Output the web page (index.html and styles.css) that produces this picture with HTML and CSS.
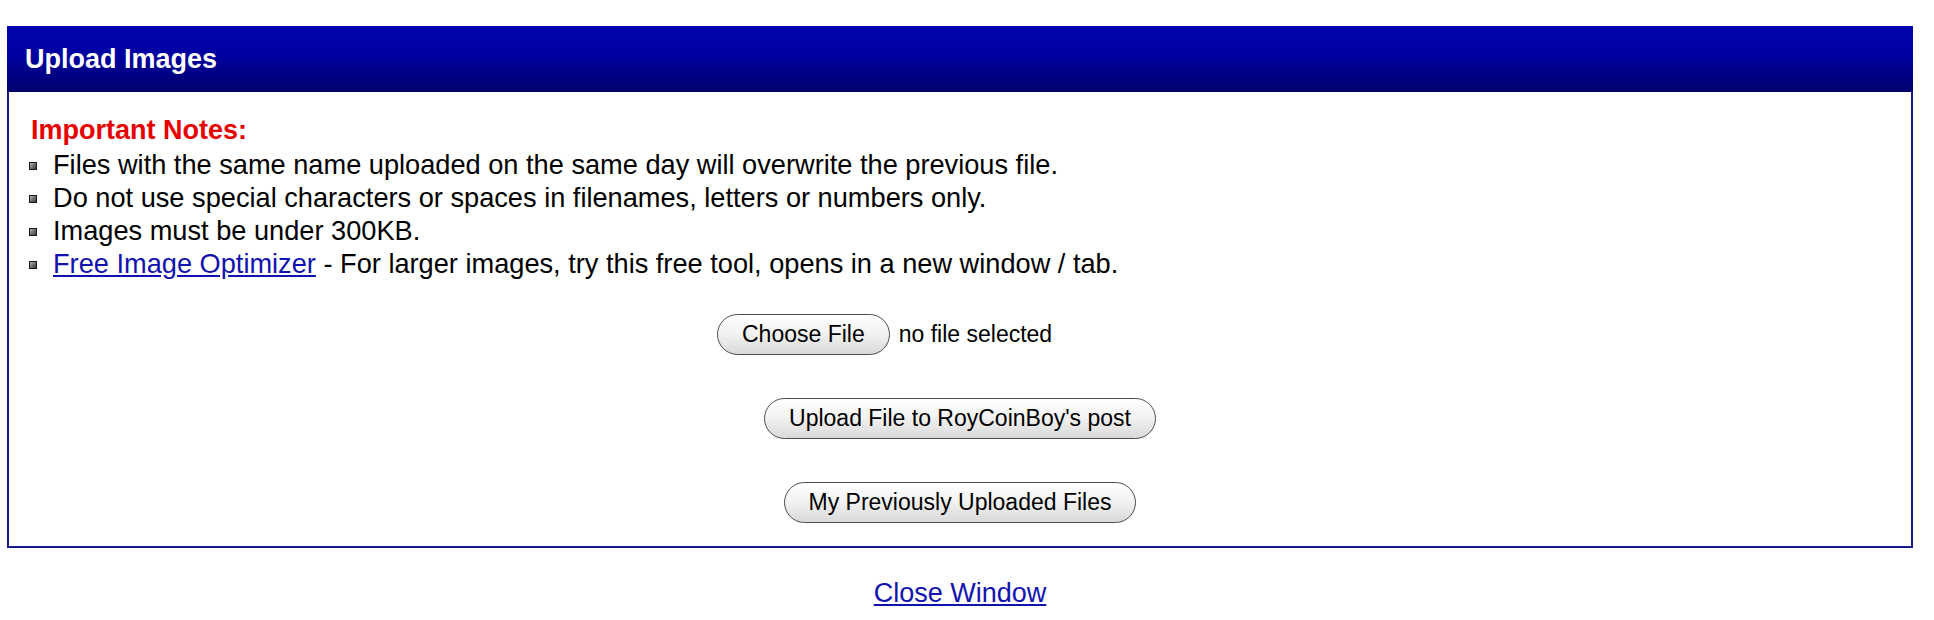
FILE: index.html
```html
<!DOCTYPE html>
<html lang="en">
<head>
<meta charset="utf-8">
<title>Upload Images</title>
<link rel="stylesheet" href="styles.css">
</head>
<body>
  <div class="panel">
    <div class="panel-head">Upload Images</div>
    <div class="panel-body">
      <div class="notes-title">Important Notes:</div>
      <ul class="notes">
        <li>Files with the same name uploaded on the same day will overwrite the previous file.</li>
        <li>Do not use special characters or spaces in filenames, letters or numbers only.</li>
        <li>Images must be under 300KB.</li>
        <li><a href="#" class="link">Free Image Optimizer</a> - For larger images, try this free tool, opens in a new window / tab.</li>
      </ul>
      <form class="upload-form">
        <div class="row">
          <div class="file-field">
            <span class="btn">Choose File</span>
            <span class="file-name">no file selected</span>
          </div>
        </div>
        <div class="row">
          <button type="button" class="btn">Upload File to RoyCoinBoy's post</button>
        </div>
        <div class="row">
          <button type="button" class="btn">My Previously Uploaded Files</button>
        </div>
      </form>
    </div>
  </div>
  <div class="footer">
    <a href="#" class="link">Close Window</a>
  </div>
</body>
</html>
```

FILE: styles.css
```css
html, body {
  margin: 0;
  padding: 0;
  background: #ffffff;
}

body {
  font-family: "Liberation Sans", Arial, Helvetica, sans-serif;
  font-size: 27px;
  line-height: 32.5px;
  color: #000;
}

.panel {
  margin: 26px 21px 0 7px;
  border: 2px solid #17178a;
  border-top: 0;
}

.panel-head {
  height: 66px;
  display: flex;
  align-items: center;
  margin: 0 -2px;
  padding-left: 18px;
  background: linear-gradient(to bottom, #0404b0 0%, #0000a0 45%, #00006c 100%);
  color: #ffffff;
  font-weight: bold;
  font-size: 27px;
}

.panel-body {
  padding: 22px 0 23px 0;
}

.notes-title {
  color: #e60000;
  font-weight: bold;
  padding-left: 22px;
}

.notes {
  list-style: none;
  margin: 1px 0 0 0;
  padding: 0;
  font-size: 27.2px;
  line-height: 33px;
}

.notes li {
  padding-left: 44px;
}

/* small bevelled square bullet */
.notes li::before {
  content: "";
  display: inline-block;
  box-sizing: border-box;
  width: 8px;
  height: 8px;
  margin-left: -24px;
  margin-right: 16px;
  vertical-align: middle;
  border: 1px solid #1a1a1a;
  background: linear-gradient(135deg, #b8b8b8 0%, #707070 50%, #3a3a3a 100%);
}

.link {
  color: #1212b0;
  text-decoration: underline;
}

.upload-form {
  margin: 34px 0 0 0;
  display: flex;
  flex-direction: column;
  gap: 43px;
}

.row {
  display: flex;
  justify-content: center;
}

.file-field {
  width: 486px;
  display: flex;
  align-items: center;
  gap: 9px;
}

.btn {
  box-sizing: border-box;
  height: 41px;
  display: inline-flex;
  align-items: center;
  padding: 0 24px;
  border: 1.5px solid #4d4d4d;
  border-radius: 21px;
  background: linear-gradient(to bottom, #ffffff 0%, #f3f3f3 45%, #d9d9d9 100%);
  font-family: "Liberation Sans", Arial, Helvetica, sans-serif;
  font-size: 23px;
  color: #000;
  line-height: 1;
  margin: 0;
}

.file-name {
  font-size: 23px;
}

.footer {
  margin: 29px 21px 0 7px;
  text-align: center;
}
```
